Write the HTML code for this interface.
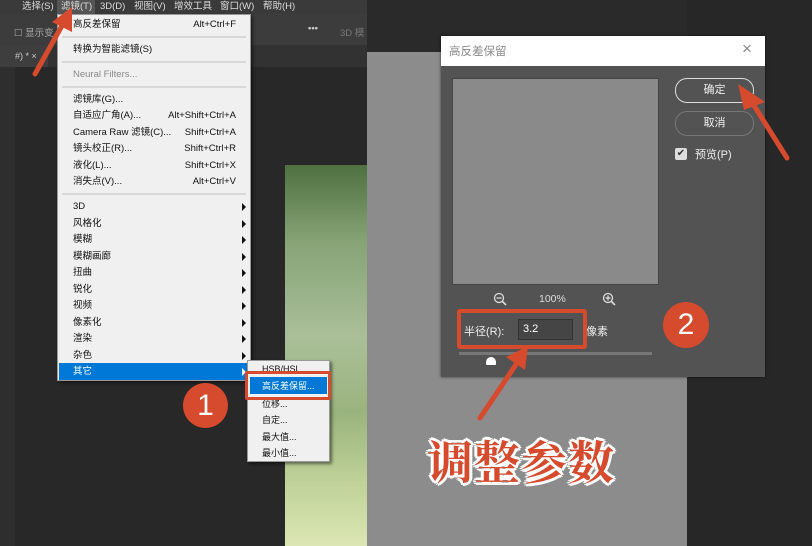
<!DOCTYPE html>
<html><head><meta charset="utf-8"><style>
*{margin:0;padding:0;box-sizing:border-box}
body{width:812px;height:546px;overflow:hidden;background:#2a2a2a;position:relative;font-family:"Liberation Sans","Noto Sans CJK SC",sans-serif}
.a{position:absolute}
.mi{position:absolute;left:15px;font-size:9.5px;line-height:12px;color:#111;white-space:nowrap}
.sc{position:absolute;right:14px;font-size:9.5px;line-height:12px;color:#111}
.sep{position:absolute;left:4px;right:4px;height:2px;background:#d8d8d8}
.ar{position:absolute;right:4px;width:0;height:0;border-top:4px solid transparent;border-bottom:4px solid transparent;border-left:4px solid #111}
.si{position:absolute;left:14px;font-size:9px;line-height:12px;color:#111}
</style></head><body>
<div class="a" style="left:0;top:0;width:367px;height:546px;background:#282828"></div>
<div class="a" style="left:0;top:0;width:367px;height:14px;background:#3a3a3a;font-size:9.5px;line-height:12px;color:#ddd;white-space:nowrap">
<span class="a" style="left:22px;top:1px">选择(S)</span><span class="a" style="left:57px;top:0;width:38px;height:14px;background:#555"></span><span class="a" style="left:61px;top:1px">滤镜(T)</span><span class="a" style="left:100px;top:1px">3D(D)</span><span class="a" style="left:134px;top:1px">视图(V)</span><span class="a" style="left:174px;top:1px">增效工具</span><span class="a" style="left:220px;top:1px">窗口(W)</span><span class="a" style="left:263px;top:1px">帮助(H)</span></div>
<div class="a" style="left:0;top:14px;width:367px;height:31px;background:#3c3c3c;font-size:9.5px;color:#aaa">
<span class="a" style="left:14px;top:11px">☐ 显示变</span><span class="a" style="left:308px;top:9px;color:#ccc;font-weight:bold">•••</span><span class="a" style="left:340px;top:11px;color:#777">3D 模</span></div>
<div class="a" style="left:0;top:45px;width:367px;height:22px;background:#323232"></div>
<div class="a" style="left:0;top:45px;width:48px;height:22px;background:#3e3e3e;font-size:9px;color:#ccc;padding:6px 0 0 15px">#) * ×</div>
<div class="a" style="left:0;top:67px;width:15px;height:479px;background:#2e2e2e"></div>
<div class="a" style="left:285px;top:165px;width:82px;height:381px;background:linear-gradient(180deg,#4f7040 0%,#86a376 20%,#aabf98 45%,#9ab47e 65%,#c2d49a 85%,#dbe6b4 100%)"></div>
<div class="a" style="left:367px;top:52px;width:320px;height:494px;background:#8c8c8c"></div>
<div class="a" style="left:687px;top:0;width:125px;height:546px;background:#272727"></div>
<div class="a" style="left:57px;top:14px;width:194px;height:367px;background:#f0f0f0;border:1px solid #999;box-shadow:2px 2px 3px rgba(0,0,0,.5)">
<div class="mi" style="top:4px">高反差保留</div><div class="sc" style="top:4px">Alt+Ctrl+F</div>
<div class="sep" style="top:21px"></div>
<div class="mi" style="top:29px">转换为智能滤镜(S)</div>
<div class="sep" style="top:46px"></div>
<div class="mi" style="top:54px;color:#888">Neural Filters...</div>
<div class="sep" style="top:71px"></div>
<div class="mi" style="top:79px">滤镜库(G)...</div>
<div class="mi" style="top:95px">自适应广角(A)...</div><div class="sc" style="top:95px">Alt+Shift+Ctrl+A</div>
<div class="mi" style="top:112px">Camera Raw 滤镜(C)...</div><div class="sc" style="top:112px">Shift+Ctrl+A</div>
<div class="mi" style="top:128px">镜头校正(R)...</div><div class="sc" style="top:128px">Shift+Ctrl+R</div>
<div class="mi" style="top:145px">液化(L)...</div><div class="sc" style="top:145px">Shift+Ctrl+X</div>
<div class="mi" style="top:161px">消失点(V)...</div><div class="sc" style="top:161px">Alt+Ctrl+V</div>
<div class="sep" style="top:178px"></div>
<div class="mi" style="top:186px">3D</div><div class="ar" style="top:188px"></div>
<div class="mi" style="top:203px">风格化</div><div class="ar" style="top:205px"></div>
<div class="mi" style="top:219px">模糊</div><div class="ar" style="top:221px"></div>
<div class="mi" style="top:236px">模糊画廊</div><div class="ar" style="top:238px"></div>
<div class="mi" style="top:252px">扭曲</div><div class="ar" style="top:254px"></div>
<div class="mi" style="top:269px">锐化</div><div class="ar" style="top:271px"></div>
<div class="mi" style="top:285px">视频</div><div class="ar" style="top:287px"></div>
<div class="mi" style="top:302px">像素化</div><div class="ar" style="top:304px"></div>
<div class="mi" style="top:318px">渲染</div><div class="ar" style="top:320px"></div>
<div class="mi" style="top:335px">杂色</div><div class="ar" style="top:337px"></div>
<div class="a" style="left:1px;top:348px;width:190px;height:17px;background:#0078d7"></div>
<div class="mi" style="top:351px;color:#fff">其它</div><div class="ar" style="top:353px;border-left-color:#fff"></div>
</div>
<div class="a" style="left:247px;top:360px;width:83px;height:102px;background:#f0f0f0;border:1px solid #999;box-shadow:2px 2px 3px rgba(0,0,0,.5)">
<div class="si" style="top:2px">HSB/HSL</div>
<div class="a" style="left:2px;top:16px;width:77px;height:17px;background:#0078d7"></div>
<div class="si" style="top:19px;color:#fff">高反差保留...</div>
<div class="si" style="top:37px">位移...</div>
<div class="si" style="top:53px">自定...</div>
<div class="si" style="top:70px">最大值...</div>
<div class="si" style="top:86px">最小值...</div>
</div>
<div class="a" style="left:245px;top:371px;width:86px;height:29px;border:3px solid #d64a2e;border-radius:2px"></div>
<div class="a" style="left:441px;top:36px;width:324px;height:341px;background:#535353;box-shadow:0 0 3px rgba(0,0,0,.6)">
<div class="a" style="left:0;top:0;width:324px;height:30px;background:#fff"></div>
<div class="a" style="left:8px;top:7px;font-size:11.5px;color:#888">高反差保留</div>
<div class="a" style="left:301px;top:3px;font-size:17px;color:#888">×</div>
<div class="a" style="left:11px;top:42px;width:207px;height:207px;background:#8a8a8a;border:1px solid #444"></div>
<div class="a" style="left:234px;top:42px;width:79px;height:25px;border:1.5px solid #ddd;border-radius:12px;color:#eee;font-size:11px;text-align:center;line-height:22px">确定</div>
<div class="a" style="left:234px;top:75px;width:79px;height:25px;border:1.5px solid #777;border-radius:12px;color:#eee;font-size:11px;text-align:center;line-height:22px">取消</div>
<div class="a" style="left:234px;top:112px;width:12px;height:12px;background:#ddd;border-radius:2px;font-size:10px;line-height:12px;text-align:center;color:#333">✔</div>
<div class="a" style="left:254px;top:110px;font-size:11px;color:#eee">预览(P)</div>
<svg class="a" style="left:52px;top:256px" width="14" height="14"><circle cx="6" cy="6" r="4.5" fill="none" stroke="#ddd" stroke-width="1.3"/><line x1="3.5" y1="6" x2="8.5" y2="6" stroke="#ddd" stroke-width="1.3"/><line x1="9.3" y1="9.3" x2="13" y2="13" stroke="#ddd" stroke-width="1.6"/></svg>
<div class="a" style="left:98px;top:257px;font-size:10.5px;color:#ddd">100%</div>
<svg class="a" style="left:161px;top:256px" width="14" height="14"><circle cx="6" cy="6" r="4.5" fill="none" stroke="#ddd" stroke-width="1.3"/><line x1="3.5" y1="6" x2="8.5" y2="6" stroke="#ddd" stroke-width="1.3"/><line x1="6" y1="3.5" x2="6" y2="8.5" stroke="#ddd" stroke-width="1.3"/><line x1="9.3" y1="9.3" x2="13" y2="13" stroke="#ddd" stroke-width="1.6"/></svg>
<div class="a" style="left:23px;top:287px;font-size:11px;color:#eee">半径(R):</div>
<div class="a" style="left:77px;top:283px;width:55px;height:21px;background:#454545;border:1px solid #333;color:#fff;font-size:11px;padding:3px 0 0 4px">3.2</div>
<div class="a" style="left:145px;top:287px;font-size:11px;color:#eee">像素</div>
<div class="a" style="left:18px;top:316px;width:193px;height:3px;background:#777"></div>
<div class="a" style="left:45px;top:321px;width:10px;height:8px;background:#fff;border-radius:5px 5px 1px 1px"></div>
</div>
<div class="a" style="left:457px;top:309px;width:130px;height:40px;border:4px solid #d64a2e;border-radius:3px"></div>
<div class="a" style="left:183px;top:383px;width:45px;height:45px;border-radius:50%;background:#d64a2e;color:#fff;font-size:30px;text-align:center;line-height:45px">1</div>
<div class="a" style="left:663px;top:302px;width:46px;height:46px;border-radius:50%;background:#d64a2e;color:#fff;font-size:30px;text-align:center;line-height:46px">2</div>
<svg class="a" style="left:0;top:0" width="812" height="546">
<g stroke="#d64a2e" stroke-width="5" stroke-linecap="round" fill="#d64a2e">
<line x1="35" y1="74" x2="64" y2="22"/>
<line x1="787" y1="158" x2="748" y2="96"/>
<line x1="480" y1="418" x2="519" y2="360"/>
</g>
<g fill="#d64a2e">
<polygon points="72,7 52,22 72,32"/>
<polygon points="738,84 765,102 744,110"/>
<polygon points="528,346 506,357 525,370"/>
</g>
</svg>
<div class="a" style="left:427px;top:436px;font-family:'Liberation Serif','Noto Serif CJK SC',serif;font-size:46px;font-weight:bold;color:#d64a2e;text-shadow:2px 0 #fff,-2px 0 #fff,0 2px #fff,0 -2px #fff,2px 2px #fff,-2px -2px #fff,2px -2px #fff,-2px 2px #fff,3px 0 #fff,-3px 0 #fff,0 3px #fff,0 -3px #fff;letter-spacing:1px;line-height:56px;white-space:nowrap">调整参数</div>
</body></html>
